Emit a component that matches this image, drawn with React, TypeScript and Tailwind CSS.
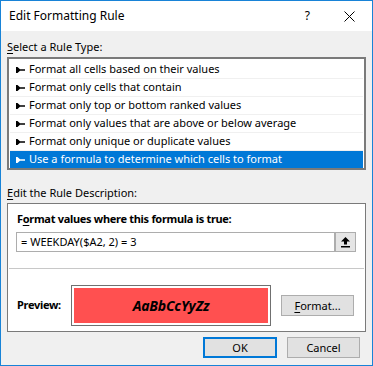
import React from "react"

const rules = [
  "Format all cells based on their values",
  "Format only cells that contain",
  "Format only top or bottom ranked values",
  "Format only values that are above or below average",
  "Format only unique or duplicate values",
  "Use a formula to determine which cells to format",
]

function Bullet({ color }: { color: string }) {
  return (
    <svg width="9" height="6" viewBox="0 0 9 6" className="shrink-0">
      <path d="M0 0 L1.5 0 L4 2.2 L9 2.2 L9 3.8 L4 3.8 L1.5 6 L0 6 Z" fill={color} />
    </svg>
  )
}

function CollapseIcon() {
  return (
    <svg width="9" height="11" viewBox="0 0 9 11">
      <path d="M4.5 0 L9 4.5 L6 4.5 L6 7.5 L3 7.5 L3 4.5 L0 4.5 Z" fill="#000" />
      <rect x="0" y="9" width="9" height="1.5" fill="#000" />
    </svg>
  )
}

export default function App() {
  return (
    <div className="w-[373px] h-[366px] border border-[#1883d7] bg-[#f0f0f0] flex flex-col text-[11px] text-black font-['Noto_Sans','Liberation_Sans',sans-serif]">
      {/* title bar */}
      <div className="h-[30px] bg-white flex items-center pl-[8px] shrink-0">
        <span className="flex-1 text-[12px]">Edit Formatting Rule</span>
        <span className="text-[12px]">?</span>
        <div className="w-[34px]" />
        <svg width="11" height="11" viewBox="0 0 11 11" className="mr-[17px]">
          <path d="M0.5 0.5 L10.5 10.5 M10.5 0.5 L0.5 10.5" stroke="#000" strokeWidth="1" />
        </svg>
      </div>

      <div className="flex-1 px-[6px] flex flex-col">
        <div className="pt-[8px] leading-[16px]">
          <span className="underline underline-offset-2">S</span>elect a Rule Type:
        </div>
        <div className="mt-[2px] h-[113px] border-2 border-[#7a7a7a] bg-white px-[1px] pt-[2px] overflow-hidden">
          {rules.map((r, i) => {
            const sel = i === rules.length - 1
            return (
              <div
                key={r}
                className={`h-[18px] flex items-center pl-[6px] gap-[4px] border-b ${
                  sel ? "bg-[#0078d7] text-white border-[#0078d7]" : "border-[#f0f0f0]"
                }`}
              >
                <Bullet color={sel ? "#fff" : "#000"} />
                <span>{r}</span>
              </div>
            )
          })}
        </div>

        <div className="mt-[15px] leading-[16px]">
          <span className="underline underline-offset-2">E</span>dit the Rule Description:
        </div>
        <div className="mt-[2px] h-[129px] border border-[#7a7a7a] bg-white flex flex-col">
          <div className="pt-[7px] pl-[9px] leading-[16px] font-bold tracking-[-0.3px]">
            F<span className="underline underline-offset-2">o</span>rmat values where this formula is true:
          </div>
          <div className="mt-[5px] ml-[8px] mr-[9px] h-[20px] border border-[#adadad] flex items-center">
            <span className="flex-1 pl-[4px]">= WEEKDAY($A2, 2) = 3</span>
            <div className="w-[21px] h-full bg-[#e5e5e5] border-l-2 border-[#adadad] flex items-center justify-center">
              <CollapseIcon />
            </div>
          </div>
          <div className="mt-[16px] mx-[1px] h-px bg-[#c8c8c8]" />
          <div className="mt-[16px] flex items-center">
            <div className="w-[63px] pl-[9px] font-bold tracking-[-0.3px]">Preview:</div>
            <div className="w-[200px] h-[41px] border border-[#707070] p-[2px] bg-white">
              <div className="w-full h-full bg-[#ff5050] flex items-center justify-center font-bold italic text-[14px] tracking-[-0.2px]">
                AaBbCcYyZz
              </div>
            </div>
            <button className="ml-[10px] w-[73px] h-[21px] bg-[#e1e1e1] border border-[#adadad] leading-none">
              <span className="underline underline-offset-2">F</span>ormat...
            </button>
          </div>
        </div>

        <div className="mt-[5px] flex justify-end gap-[10px] pr-[6px]">
          <button className="w-[74px] h-[21px] bg-[#e1e1e1] border-2 border-[#0078d7] leading-none">OK</button>
          <button className="w-[73px] h-[21px] bg-[#e1e1e1] border border-[#adadad] leading-none">Cancel</button>
        </div>
      </div>
    </div>
  )
}
